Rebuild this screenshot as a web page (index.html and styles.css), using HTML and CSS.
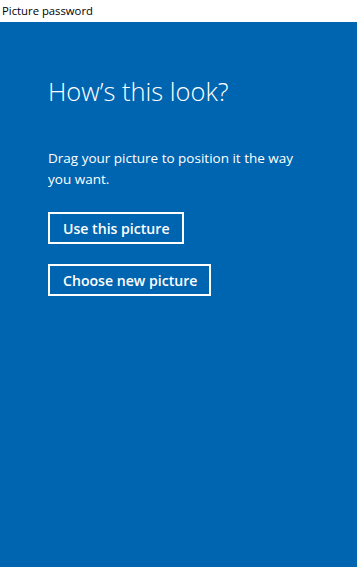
FILE: index.html
```html
<!DOCTYPE html>
<html lang="en">
<head>
  <meta charset="UTF-8" />
  <title>Picture password</title>
  <link rel="stylesheet" href="styles.css">
</head>
<body>
  <div class="title-bar">Picture password</div>

  <main class="content">
    <h1>How’s this look?</h1>
    <p class="hint">Drag your picture to position it the way you want.</p>

    <div class="buttons">
      <button type="button">Use this picture</button>
      <button type="button">Choose new picture</button>
    </div>
  </main>
</body>
</html>
```

FILE: styles.css
```css
html, body {
  height: 100%;
}
body {
  margin: 0;
  display: flex;
  flex-direction: column;
  font-family: "Open Sans", "Noto Sans", sans-serif;
  background: #0065b0;
}
.title-bar {
  height: 22px;
  line-height: 22px;
  padding-left: 2px;
  background: white;
  color: black;
  font-size: 11.3px;
}
.content {
  flex: 1;
  padding: 0 20px 0 48px;
  color: white;
}
h1 {
  margin: 51px 0 0;
  font-size: 25.5px;
  font-weight: 300;
  line-height: 36px;
}
.hint {
  margin: 39px 0 0;
  max-width: 260px;
  font-size: 13.5px;
  line-height: 21px;
}
.buttons {
  margin-top: 22px;
  display: flex;
  flex-direction: column;
  align-items: flex-start;
  gap: 20px;
}
button {
  font-family: inherit;
  font-size: 14.1px;
  font-weight: 600;
  color: white;
  background: transparent;
  border: 2px solid white;
  padding: 0 12px 0 13px;
  height: 32px;
}
```
